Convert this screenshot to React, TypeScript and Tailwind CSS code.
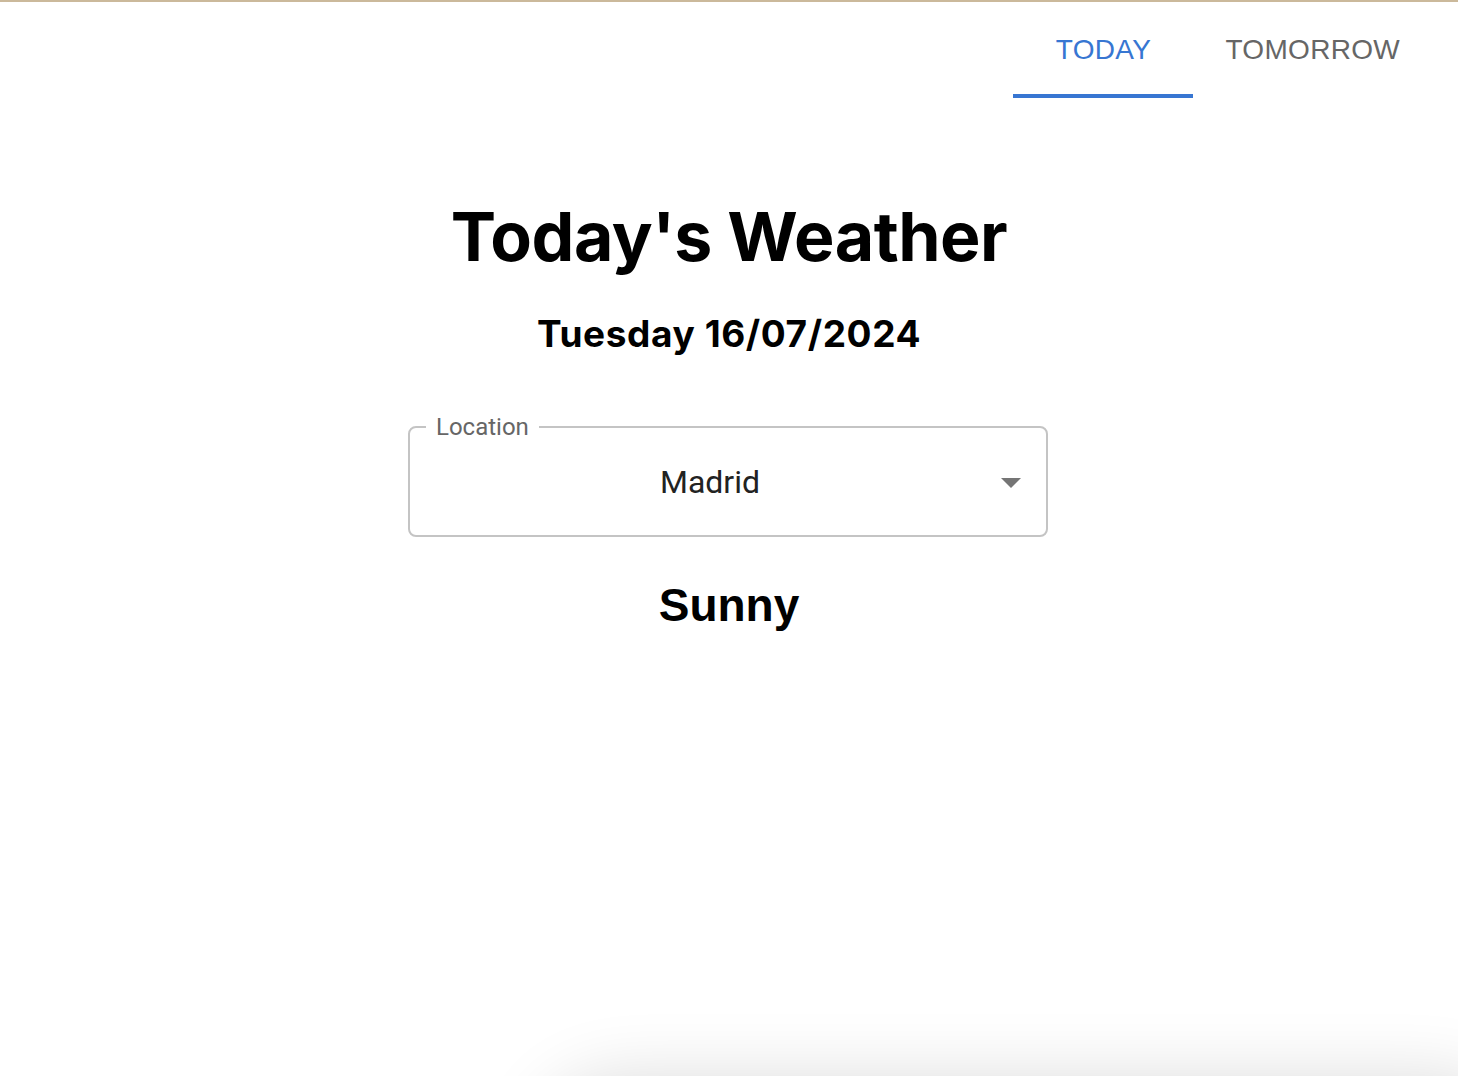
import React from "react";

export default function App() {
  return (
    <div className="relative min-h-[1076px] w-full overflow-hidden bg-white border-t-2 border-[#cbb99b]">
      <div className="flex justify-end pr-[26px]">
        <div className="flex" style={{ fontFamily: "'Liberation Sans', Arial, sans-serif" }}>
          <div className="relative flex h-[96px] min-w-[180px] items-center justify-center px-[32px] text-[28px] font-normal uppercase tracking-[0.3px] text-[#3776d2]">
            Today
            <div className="absolute bottom-0 left-0 right-0 h-[4px] bg-[#3776d2]" />
          </div>
          <div className="flex h-[96px] min-w-[180px] items-center justify-center px-[32px] text-[28px] font-normal uppercase tracking-[0.3px] text-[#666666]">
            Tomorrow
          </div>
        </div>
      </div>

      <div className="flex flex-col items-center">
        <h1
          className="mt-[98px] text-[68px] font-bold leading-[80px] tracking-[-0.5px] text-black"
          style={{ fontFamily: "Inter, 'Liberation Sans', sans-serif" }}
        >
          Today's Weather
        </h1>
        <h2
          className="mt-[36px] text-[37px] font-bold leading-[44px] tracking-[0.6px] text-black"
          style={{ fontFamily: "Inter, 'Liberation Sans', sans-serif" }}
        >
          Tuesday 16/07/2024
        </h2>

        <div className="relative mt-[71px] mr-[2px] h-[110px] w-[640px]" style={{ fontFamily: "Roboto, 'Liberation Sans', sans-serif" }}>
          <fieldset className="absolute inset-0 -top-[11px] m-0 rounded-[8px] border-[2px] border-[#c4c4c4] px-[16px]">
            <legend className="px-[10px] text-[24px] leading-[22px] text-[#666666]">Location</legend>
          </fieldset>
          <div className="absolute inset-0 flex items-center justify-center pr-[36px] text-[32px] text-[#222222]">
            Madrid
          </div>
          <svg className="absolute right-[27px] top-[51px]" width="20" height="10" viewBox="0 0 20 10">
            <path d="M0 0 L20 0 L10 10 Z" fill="#757575" />
          </svg>
        </div>

        <div
          className="mt-[41px] text-[46px] font-bold leading-[54px] text-black"
          style={{ fontFamily: "'Liberation Sans', Arial, sans-serif" }}
        >
          Sunny
        </div>
      </div>

      <div className="pointer-events-none absolute left-[560px] right-[-40px] top-[1100px] h-[200px] rounded-[60px] shadow-[0_0_70px_24px_rgba(0,0,0,0.14)]" />
    </div>
  );
}
